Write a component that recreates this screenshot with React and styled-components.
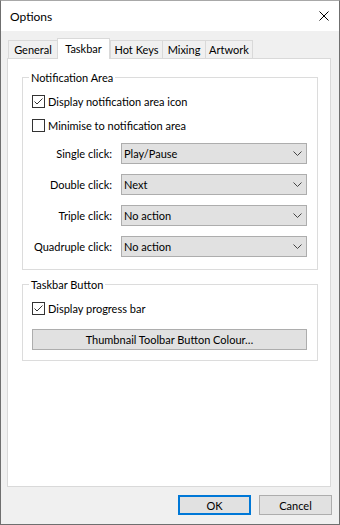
import React from 'react';
import styled, { createGlobalStyle } from 'styled-components';

const Global = createGlobalStyle`
  html, body { margin: 0; padding: 0; background: #ffffff; }
  body {
    font-family: Lato, "Noto Sans", sans-serif;
    font-size: 11px;
    font-weight: 400;
    color: #000;
  }
  * { box-sizing: border-box; }
`;

const Window = styled.div`
  width: 340px;
  height: 525px;
  display: flex;
  flex-direction: column;
  background: #f0f0f0;
  border: 1px solid #6f6f6f;
  border-top-color: #a8a8a8;
`;

const TitleBar = styled.div`
  height: 30px;
  flex: none;
  display: flex;
  align-items: center;
  background: #fff;
  padding-left: 9px;
`;

const Title = styled.span`
  flex: 1;
  font-size: 12px;
  line-height: 15px;
`;

const CloseButton = styled.div`
  width: 30px;
  height: 30px;
  display: flex;
  align-items: center;
  justify-content: center;
`;

const Body = styled.div`
  flex: 1;
  display: flex;
  flex-direction: column;
  padding: 7px 8px 0 6px;
  min-height: 0;
`;

const TabStrip = styled.div`
  height: 20px;
  flex: none;
  display: flex;
  align-items: flex-end;
  padding-left: 1px;
`;

const Tab = styled.div`
  position: relative;
  width: ${p => p.$width}px;
  height: ${p => (p.$active ? 21 : 18)}px;
  margin-bottom: ${p => (p.$active ? -1 : 0)}px;
  z-index: ${p => (p.$active ? 1 : 0)};
  display: flex;
  align-items: center;
  justify-content: center;
  background: ${p => (p.$active ? '#fff' : '#f0f0f0')};
  border-top: 1px solid #d9d9d9;
  border-left: 1px solid #d9d9d9;
  border-right: ${p => (p.$active || p.$last ? '1px solid #d9d9d9' : '0')};
  padding-bottom: ${p => (p.$active ? 2 : 0)}px;
  line-height: 15px;
  white-space: nowrap;
`;

const Panel = styled.div`
  flex: 1;
  display: flex;
  flex-direction: column;
  gap: 7px;
  background: #fff;
  border: 1px solid #d9d9d9;
  padding: 11px 12px 0 14px;
`;

const Group = styled.fieldset`
  margin: 0;
  padding: 0;
  min-width: 0;
  border: 1px solid #dcdcdc;
`;

const Legend = styled.legend`
  margin-left: 6px;
  padding: 0 2px;
  line-height: 15px;
`;

const GroupContent = styled.div`
  display: flex;
  flex-direction: column;
  padding: 8px 10px ${p => p.$bottom}px 9px;
`;

const CheckList = styled.div`
  display: flex;
  flex-direction: column;
  gap: 7px;
`;

const CheckRow = styled.label`
  height: 17px;
  display: flex;
  align-items: center;
  gap: 3px;
  line-height: 15px;
`;

const Box = styled.span`
  width: 13px;
  height: 13px;
  flex: none;
  display: flex;
  border: 1px solid #333;
  background: #fff;
`;

const ComboGrid = styled.div`
  margin-top: 9px;
  display: grid;
  grid-template-columns: 80px 1fr;
  column-gap: 9px;
  row-gap: 10px;
  grid-auto-rows: 21px;
  align-items: center;
`;

const FieldLabel = styled.span`
  text-align: right;
  white-space: nowrap;
  line-height: 15px;
`;

const Combo = styled.div`
  height: 21px;
  display: flex;
  align-items: center;
  justify-content: space-between;
  padding: 0 4px 0 2px;
  background: #e1e1e1;
  border: 1px solid #adadad;
  line-height: 15px;
`;

const WideButton = styled.div`
  margin-top: 12px;
  height: 21px;
  display: flex;
  align-items: center;
  justify-content: center;
  background: #e1e1e1;
  border: 1px solid #adadad;
  line-height: 15px;
`;

const Footer = styled.div`
  flex: none;
  display: flex;
  justify-content: flex-end;
  gap: 8px;
  padding: 8px 7px 9px 0;
`;

const PushButton = styled.div`
  width: 73px;
  height: 20px;
  display: flex;
  align-items: center;
  justify-content: center;
  background: #e1e1e1;
  border: ${p => (p.$default ? '2px solid #0078d7' : '1px solid #adadad')};
  line-height: 15px;
`;

const CloseIcon = () => (
  <svg width="10" height="10" viewBox="0 0 10 10">
    <path d="M0.5 0.5 L9.5 9.5 M9.5 0.5 L0.5 9.5" stroke="#000" strokeWidth="1" fill="none" />
  </svg>
);

const Chevron = () => (
  <svg width="9" height="5" viewBox="0 0 9 5">
    <polyline points="0.5,0.5 4.5,4.5 8.5,0.5" stroke="#444" strokeWidth="1" fill="none" />
  </svg>
);

const Checkbox = ({ checked, children }) => (
  <CheckRow>
    <Box>
      {checked && (
        <svg width="11" height="11" viewBox="0 0 11 11">
          <polyline points="1.5,5.5 4,8 9.5,2.5" stroke="#333" strokeWidth="1" fill="none" />
        </svg>
      )}
    </Box>
    <span>{children}</span>
  </CheckRow>
);

const tabs = [
  { label: 'General', width: 49 },
  { label: 'Taskbar', width: 53, active: true },
  { label: 'Hot Keys', width: 52 },
  { label: 'Mixing', width: 43 },
  { label: 'Artwork', width: 48, last: true },
];

const combos = [
  ['Single click:', 'Play/Pause'],
  ['Double click:', 'Next'],
  ['Triple click:', 'No action'],
  ['Quadruple click:', 'No action'],
];

export default function App() {
  return (
    <>
      <Global />
      <Window>
        <TitleBar>
          <Title>Options</Title>
          <CloseButton>
            <CloseIcon />
          </CloseButton>
        </TitleBar>
        <Body>
          <TabStrip>
            {tabs.map(t => (
              <Tab key={t.label} $width={t.width} $active={t.active} $last={t.last}>
                {t.label}
              </Tab>
            ))}
          </TabStrip>
          <Panel>
            <Group>
              <Legend>Notification Area</Legend>
              <GroupContent $bottom={12}>
                <CheckList>
                  <Checkbox checked>Display notification area icon</Checkbox>
                  <Checkbox>Minimise to notification area</Checkbox>
                </CheckList>
                <ComboGrid>
                  {combos.map(([label, value]) => (
                    <React.Fragment key={label}>
                      <FieldLabel>{label}</FieldLabel>
                      <Combo>
                        <span>{value}</span>
                        <Chevron />
                      </Combo>
                    </React.Fragment>
                  ))}
                </ComboGrid>
              </GroupContent>
            </Group>
            <Group>
              <Legend>Taskbar Button</Legend>
              <GroupContent $bottom={10}>
                <Checkbox checked>Display progress bar</Checkbox>
                <WideButton>Thumbnail Toolbar Button Colour…</WideButton>
              </GroupContent>
            </Group>
          </Panel>
        </Body>
        <Footer>
          <PushButton $default>OK</PushButton>
          <PushButton>Cancel</PushButton>
        </Footer>
      </Window>
    </>
  );
}
